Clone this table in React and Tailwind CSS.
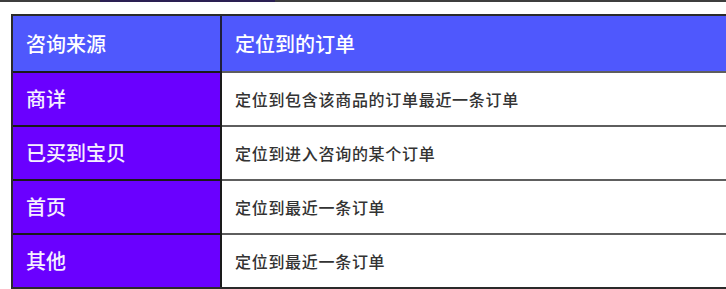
const rows = [
  ["商详", "定位到包含该商品的订单最近一条订单"],
  ["已买到宝贝", "定位到进入咨询的某个订单"],
  ["首页", "定位到最近一条订单"],
  ["其他", "定位到最近一条订单"],
];

export default function App() {
  return (
    <div
      className="w-[726px] h-[289px] overflow-hidden bg-white"
      style={{ fontFamily: '"Noto Sans CJK SC", "Noto Sans", sans-serif' }}
    >
      <div className="flex h-[2px]">
        <div className="w-[100px] bg-[#3d3d3d]" />
        <div className="w-[175px] bg-[#2a1f52]" />
        <div className="flex-1 bg-[#3d3d3d]" />
      </div>

      <div className="ml-[11px] mt-[12px] w-[760px] border-2 border-[#2a2a2a]">
        <div className="flex h-[55px] bg-[#4f58fd] text-[20px] font-medium text-white">
          <div className="w-[209px] flex items-center pl-[13px] border-r-2 border-[#1e1e3a]">
            咨询来源
          </div>
          <div className="flex-1 flex items-center pl-[13px]">定位到的订单</div>
        </div>

        {rows.map(([src, target], i) => (
          <div key={i} className="flex h-[54px]">
            <div className="w-[209px] flex items-center pl-[13px] border-t-2 border-r-2 border-[#1a1a1a] bg-[#6a00ff] text-[20px] font-medium text-[#f5f0ff]">
              {src}
            </div>
            <div className="flex-1 flex items-center pl-[13px] border-t-2 border-[#5e5e5e] text-[16px] tracking-[0.7px] font-medium text-[#333]">
              {target}
            </div>
          </div>
        ))}
      </div>
    </div>
  );
}
